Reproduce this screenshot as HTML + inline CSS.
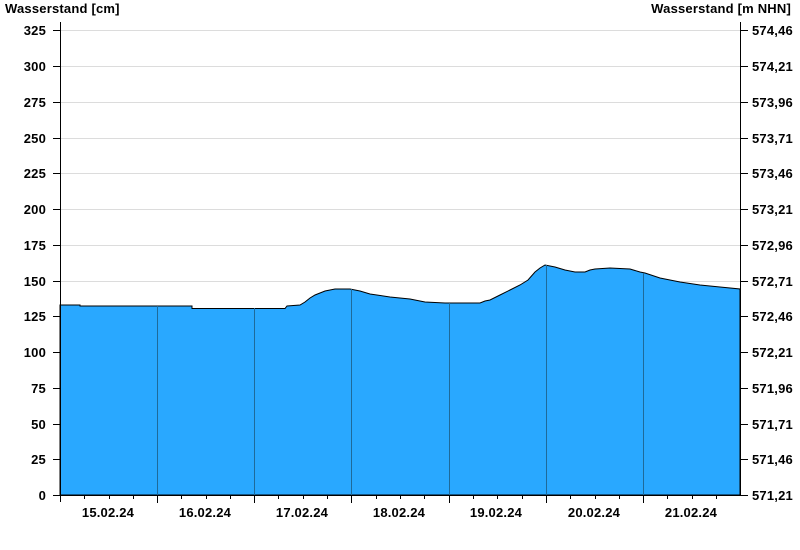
<!DOCTYPE html>
<html><head><meta charset="utf-8"><style>
html,body{margin:0;padding:0;background:#fff;}
svg{display:block;font-family:"Liberation Sans",Arial,sans-serif;font-weight:bold;font-size:13px;letter-spacing:0.2px;}
</style></head><body>
<svg width="800" height="550" viewBox="0 0 800 550" xmlns="http://www.w3.org/2000/svg">
<rect width="800" height="550" fill="#fff"/>
<text x="5" y="13">Wasserstand [cm]</text>
<text x="791" y="13" text-anchor="end">Wasserstand [m NHN]</text>
<g stroke="#dcdcdc" stroke-width="1">
<line x1="60" x2="740" y1="30.5" y2="30.5"/><line x1="60" x2="740" y1="66.5" y2="66.5"/><line x1="60" x2="740" y1="102.5" y2="102.5"/><line x1="60" x2="740" y1="138.5" y2="138.5"/><line x1="60" x2="740" y1="173.5" y2="173.5"/><line x1="60" x2="740" y1="209.5" y2="209.5"/><line x1="60" x2="740" y1="245.5" y2="245.5"/><line x1="60" x2="740" y1="281.5" y2="281.5"/><line x1="60" x2="740" y1="316.5" y2="316.5"/>
</g>
<polygon fill="#29a8ff" stroke="#000" stroke-width="1" points="60,495 60,305 80,305 80,306 192,306 192,308.5 285,308.5 287,306 300,305 305,302 310,298 315,295 320,293 325,291 335,289 350,289 360,291 370,294 390,297 410,299 420,301 425,302 445,303 480,303 485,301 490,300 500,295 510,290 520,285 528,280 535,272 540,268 545,265 550,266 555,267 565,270 575,272 585,272 590,270 595,269 610,268 630,269 640,272 645,273 660,278 680,282 700,285 720,287 740,289 740,495"/>
<g stroke="#1e6a9a" stroke-width="1">
<line x1="157.5" x2="157.5" y1="306" y2="495"/><line x1="254.5" x2="254.5" y1="308" y2="495"/><line x1="351.5" x2="351.5" y1="289" y2="495"/><line x1="449.5" x2="449.5" y1="303" y2="495"/><line x1="546.5" x2="546.5" y1="265" y2="495"/><line x1="643.5" x2="643.5" y1="273" y2="495"/>
</g>
<g stroke="#000" stroke-width="1">
<line x1="60.5" x2="60.5" y1="22" y2="502"/>
<line x1="740.5" x2="740.5" y1="22" y2="495"/>
<line x1="60" x2="741" y1="495.5" y2="495.5"/>
</g>
<g stroke="#000" stroke-width="1">
<line x1="53" x2="60" y1="30.5" y2="30.5"/><line x1="53" x2="60" y1="66.5" y2="66.5"/><line x1="53" x2="60" y1="102.5" y2="102.5"/><line x1="53" x2="60" y1="138.5" y2="138.5"/><line x1="53" x2="60" y1="173.5" y2="173.5"/><line x1="53" x2="60" y1="209.5" y2="209.5"/><line x1="53" x2="60" y1="245.5" y2="245.5"/><line x1="53" x2="60" y1="281.5" y2="281.5"/><line x1="53" x2="60" y1="316.5" y2="316.5"/><line x1="53" x2="60" y1="352.5" y2="352.5"/><line x1="53" x2="60" y1="388.5" y2="388.5"/><line x1="53" x2="60" y1="424.5" y2="424.5"/><line x1="53" x2="60" y1="459.5" y2="459.5"/><line x1="53" x2="60" y1="495.5" y2="495.5"/>
</g>
<g stroke="#000" stroke-width="1" transform="translate(688,0)">
<line x1="53" x2="60" y1="30.5" y2="30.5"/><line x1="53" x2="60" y1="66.5" y2="66.5"/><line x1="53" x2="60" y1="102.5" y2="102.5"/><line x1="53" x2="60" y1="138.5" y2="138.5"/><line x1="53" x2="60" y1="173.5" y2="173.5"/><line x1="53" x2="60" y1="209.5" y2="209.5"/><line x1="53" x2="60" y1="245.5" y2="245.5"/><line x1="53" x2="60" y1="281.5" y2="281.5"/><line x1="53" x2="60" y1="316.5" y2="316.5"/><line x1="53" x2="60" y1="352.5" y2="352.5"/><line x1="53" x2="60" y1="388.5" y2="388.5"/><line x1="53" x2="60" y1="424.5" y2="424.5"/><line x1="53" x2="60" y1="459.5" y2="459.5"/><line x1="53" x2="60" y1="495.5" y2="495.5"/>
</g>
<g stroke="#000" stroke-width="1">
<line x1="157.5" x2="157.5" y1="495" y2="503"/><line x1="254.5" x2="254.5" y1="495" y2="503"/><line x1="351.5" x2="351.5" y1="495" y2="503"/><line x1="449.5" x2="449.5" y1="495" y2="503"/><line x1="546.5" x2="546.5" y1="495" y2="503"/><line x1="643.5" x2="643.5" y1="495" y2="503"/>
<line x1="84.5" x2="84.5" y1="495" y2="499"/><line x1="109.5" x2="109.5" y1="495" y2="499"/><line x1="133.5" x2="133.5" y1="495" y2="499"/>
<line x1="181.5" x2="181.5" y1="495" y2="499"/><line x1="206.5" x2="206.5" y1="495" y2="499"/><line x1="230.5" x2="230.5" y1="495" y2="499"/>
<line x1="278.5" x2="278.5" y1="495" y2="499"/><line x1="303.5" x2="303.5" y1="495" y2="499"/><line x1="327.5" x2="327.5" y1="495" y2="499"/>
<line x1="376.5" x2="376.5" y1="495" y2="499"/><line x1="400.5" x2="400.5" y1="495" y2="499"/><line x1="424.5" x2="424.5" y1="495" y2="499"/>
<line x1="473.5" x2="473.5" y1="495" y2="499"/><line x1="497.5" x2="497.5" y1="495" y2="499"/><line x1="522.5" x2="522.5" y1="495" y2="499"/>
<line x1="570.5" x2="570.5" y1="495" y2="499"/><line x1="595.5" x2="595.5" y1="495" y2="499"/><line x1="619.5" x2="619.5" y1="495" y2="499"/>
<line x1="667.5" x2="667.5" y1="495" y2="499"/><line x1="692.5" x2="692.5" y1="495" y2="499"/><line x1="716.5" x2="716.5" y1="495" y2="499"/>
</g>
<g text-anchor="end">
<text x="46" y="35">325</text><text x="46" y="71">300</text><text x="46" y="107">275</text><text x="46" y="143">250</text><text x="46" y="178">225</text><text x="46" y="214">200</text><text x="46" y="250">175</text><text x="46" y="286">150</text><text x="46" y="321">125</text><text x="46" y="357">100</text><text x="46" y="393">75</text><text x="46" y="429">50</text><text x="46" y="464">25</text><text x="46" y="500">0</text>
</g>
<g>
<text x="752" y="35">574,46</text><text x="752" y="71">574,21</text><text x="752" y="107">573,96</text><text x="752" y="143">573,71</text><text x="752" y="178">573,46</text><text x="752" y="214">573,21</text><text x="752" y="250">572,96</text><text x="752" y="286">572,71</text><text x="752" y="321">572,46</text><text x="752" y="357">572,21</text><text x="752" y="393">571,96</text><text x="752" y="429">571,71</text><text x="752" y="464">571,46</text><text x="752" y="500">571,21</text>
</g>
<g text-anchor="middle">
<text x="108" y="517">15.02.24</text><text x="205" y="517">16.02.24</text><text x="302" y="517">17.02.24</text><text x="399" y="517">18.02.24</text><text x="496" y="517">19.02.24</text><text x="594" y="517">20.02.24</text><text x="691" y="517">21.02.24</text>
</g>
</svg>
</body></html>
